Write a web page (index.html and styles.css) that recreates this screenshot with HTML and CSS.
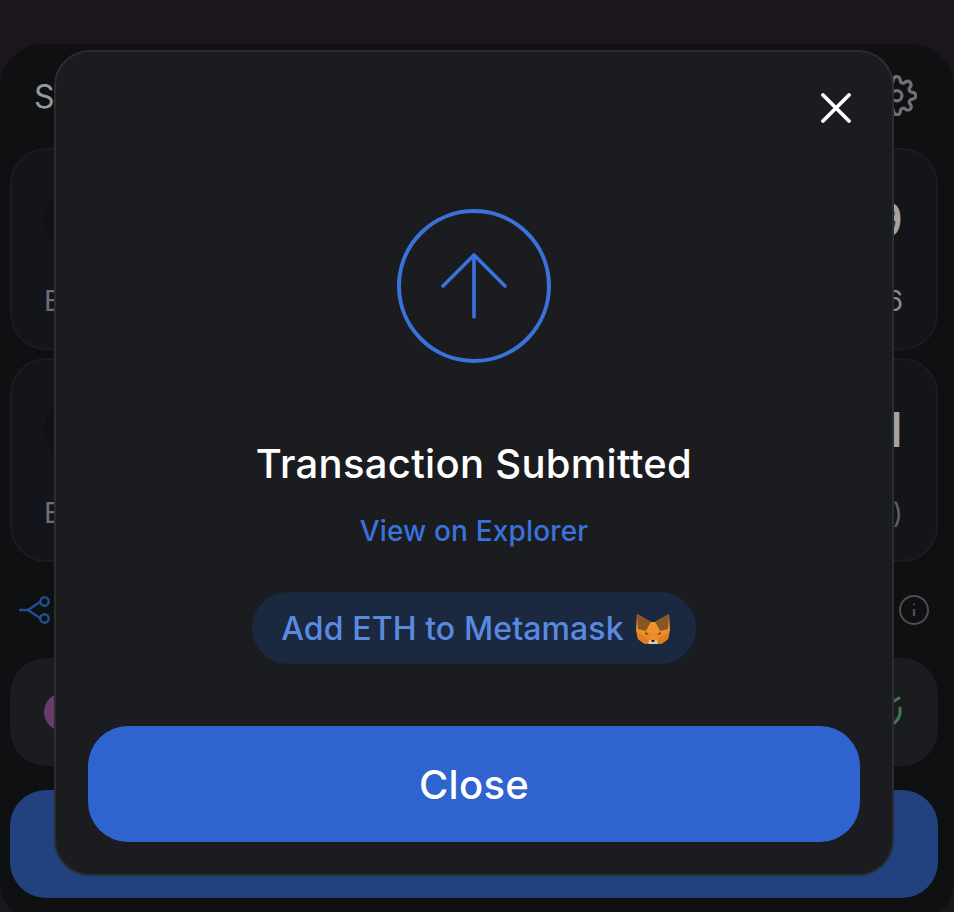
FILE: index.html
```html
<!DOCTYPE html>
<html lang="en">
<head>
<meta charset="utf-8">
<title>Swap</title>
<link rel="stylesheet" href="styles.css">
</head>
<body>
<main class="panel">
  <header class="panel-head">
    <span class="panel-title">Swap</span>
    <svg class="gear" viewBox="0 0 24 24" fill="none" stroke="#6f7073" stroke-width="1.9" stroke-linecap="round" stroke-linejoin="round"><circle cx="12" cy="12" r="3"/><path d="M19.4 15a1.65 1.65 0 0 0 .33 1.82l.06.06a2 2 0 0 1 0 2.83 2 2 0 0 1-2.83 0l-.06-.06a1.65 1.65 0 0 0-1.82-.33 1.65 1.65 0 0 0-1 1.51V21a2 2 0 0 1-2 2 2 2 0 0 1-2-2v-.09A1.65 1.65 0 0 0 9 19.4a1.65 1.65 0 0 0-1.82.33l-.06.06a2 2 0 0 1-2.83 0 2 2 0 0 1 0-2.83l.06-.06a1.65 1.65 0 0 0 .33-1.82 1.65 1.65 0 0 0-1.51-1H3a2 2 0 0 1-2-2 2 2 0 0 1 2-2h.09A1.65 1.65 0 0 0 4.6 9a1.65 1.65 0 0 0-.33-1.82l-.06-.06a2 2 0 0 1 0-2.83 2 2 0 0 1 2.83 0l.06.06a1.65 1.65 0 0 0 1.82.33H9a1.65 1.65 0 0 0 1-1.51V3a2 2 0 0 1 2-2 2 2 0 0 1 2 2v.09a1.65 1.65 0 0 0 1 1.51 1.65 1.65 0 0 0 1.82-.33l.06-.06a2 2 0 0 1 2.83 0 2 2 0 0 1 0 2.83l-.06.06a1.65 1.65 0 0 0-.33 1.82V9a1.65 1.65 0 0 0 1.51 1H21a2 2 0 0 1 2 2 2 2 0 0 1-2 2h-.09a1.65 1.65 0 0 0-1.51 1z"/></svg>
  </header>
  <section class="card card-first">
    <div class="card-top"><span class="token"></span><span class="amount">9</span></div>
    <div class="card-bottom"><span>Est</span><span>6</span></div>
  </section>
  <section class="card card-second">
    <div class="card-top"><span class="token"></span><span class="amount">I</span></div>
    <div class="card-bottom"><span>Est</span><span class="dim">)</span></div>
  </section>
  <div class="route">
    <svg class="route-icon" viewBox="0 0 32 28" fill="none" stroke="#224e96" stroke-width="2.4" stroke-linecap="round"><path d="M1 14h8M9 14l12-8M9 14l12 8"/><circle cx="25.5" cy="5.5" r="4.2"/><circle cx="25.5" cy="22.5" r="4.2"/></svg>
    <svg class="info-icon" viewBox="0 0 30 30" fill="none" stroke="#4d4e51" stroke-width="2"><circle cx="15" cy="15" r="14"/><path d="M15 14v7" stroke-width="2.4"/><circle cx="15" cy="9.5" r="1" fill="#4d4e51" stroke="none"/></svg>
  </div>
  <section class="provider">
    <span class="provider-dot"></span>
    <svg class="provider-check" viewBox="0 0 24 36" fill="none" stroke="#3b7a49" stroke-width="3" stroke-linecap="round"><path d="M10 9l8-5M19 14c1 8-3 14-9 17"/></svg>
  </section>
  <div class="swap-btn"></div>
</main>

<div class="modal" role="dialog">
  <div class="modal-top">
    <svg class="close-x" viewBox="0 0 30 30" stroke="#fff" stroke-width="3.8" stroke-linecap="round"><path d="M2 2l26 26M28 2L2 28"/></svg>
  </div>
  <svg class="submitted" viewBox="0 0 156 156" fill="none" stroke="#3a72dc" stroke-linecap="round" stroke-linejoin="round"><circle cx="78" cy="78" r="75" stroke-width="4"/><path d="M78 109V47M47 78l31-31 31 31" stroke-width="3.6"/></svg>
  <h2 class="modal-title">Transaction Submitted</h2>
  <a class="explorer">View on Explorer</a>
  <div class="add-token">
    <span>Add ETH to Metamask</span>
    <svg class="fox" viewBox="0 0 34 34">
      <path d="M1 2l14 8h4L33 2l1 16-2 9-7 5-5-2h-6l-5 2-7-5-2-9z" fill="#ee8c2c"/>
      <path d="M1 2l14 8-5 9-8-2z" fill="#8a5524"/>
      <path d="M33 2L19 10l5 9 8-2z" fill="#8a5524"/>
      <path d="M15 10h4l5 9-7 3-7-3z" fill="#f0932e"/>
      <path d="M10 20l-1 2 4 1zM24 20l1 2-4 1z" fill="#5a3a1e"/>
      <path d="M1 22l8 2 4 4-1 4-5-1-5-4z" fill="#df7f20"/>
      <path d="M33 22l-8 2-4 4 1 4 5-1 5-4z" fill="#df7f20"/>
      <path d="M13 28h8l1 4h-10z" fill="#d9c8b4"/>
      <path d="M15 28h4l-1 2h-2z" fill="#2a2320"/>
    </svg>
  </div>
  <div class="close-btn">Close</div>
</div>
</body>
</html>
```
FILE: styles.css
```css
* { box-sizing: border-box; }
html, body { margin: 0; height: 100%; }
body {
  position: relative;
  height: 912px;
  overflow: hidden;
  background: #1b161c;
  padding-top: 44px;
  font-family: "Inter", "Liberation Sans", sans-serif;
}
.panel {
  height: 880px;
  background: #0f1012;
  border-radius: 44px;
  padding: 0 16px 0 10px;
  display: flex;
  flex-direction: column;
}
.panel-head {
  height: 104px;
  flex: none;
  display: flex;
  align-items: center;
  justify-content: space-between;
  padding: 0 21px 0 24px;
}
.panel-title { font-size: 32px; color: #98999b; }
.gear { width: 41.5px; height: 41.5px; margin-top: -1px; }
.card {
  flex: none;
  background: #14151a;
  border: 2px solid #1b1c20;
  border-radius: 36px;
  padding: 38px 33px 30px 32px;
  display: flex;
  flex-direction: column;
  justify-content: space-between;
}
.card-first { height: 202px; }
.card-second { height: 204px; margin-top: 8px; }
.card-top, .card-bottom { display: flex; align-items: center; justify-content: space-between; }
.token {
  width: 64px; height: 64px; border-radius: 50%;
  background: #101115;
}
.amount { font-size: 48px; font-weight: 500; color: #a2a3a5; line-height: 60px; }
.card-bottom { font-size: 28px; color: #6e6f72; }
.card-bottom span:last-child { color: #8a8b8e; }
.card-bottom .dim { color: #5c5e6a !important; }
.route {
  height: 96px;
  flex: none;
  display: flex;
  align-items: center;
  justify-content: space-between;
  padding: 0 9px;
}
.route-icon { width: 32px; height: 28px; }
.info-icon { width: 30px; height: 30px; }
.provider {
  height: 108px;
  flex: none;
  background: #1b1c20;
  border-radius: 36px;
  display: flex;
  align-items: center;
  justify-content: space-between;
  padding: 0 33px 0 34px;
}
.provider-dot { width: 38px; height: 38px; border-radius: 50%; background: #6a3a6a; }
.provider-check { width: 24px; height: 36px; }
.swap-btn {
  height: 108px;
  flex: none;
  margin-top: 24px;
  background: #21427f;
  border-radius: 36px;
}
.modal {
  position: absolute;
  left: 54px;
  top: 50px;
  width: 840px;
  height: 826px;
  background: #1b1c20;
  border: 2px solid #2b2d33;
  border-radius: 36px;
  padding: 41px 32px 32px;
  display: flex;
  flex-direction: column;
  align-items: center;
}
.modal-top { width: 100%; flex: none; display: flex; justify-content: flex-end; padding-right: 9px; }
.close-x { width: 30px; height: 30px; }
.submitted { width: 156px; height: 156px; margin-top: 85px; flex: none; }
.modal-title {
  flex: none;
  margin: 76px 0 0;
  font-size: 40px;
  font-weight: 450;
  line-height: 48px;
  letter-spacing: 0.3px;
  color: #fff;
}
.explorer {
  flex: none;
  margin-top: 25px;
  font-size: 28px;
  font-weight: 450;
  line-height: 36px;
  letter-spacing: 0.15px;
  color: #3a72dc;
}
.add-token {
  flex: none;
  margin-top: 43px;
  height: 72px;
  padding: 0 26px 0 29px;
  background: #1a2840;
  border-radius: 36px;
  display: flex;
  align-items: center;
  gap: 12px;
  font-size: 32px;
  font-weight: 450;
  letter-spacing: 0.1px;
  color: #5a8ae0;
}
.fox { width: 34px; height: 34px; margin-top: 2px; }
.close-btn {
  flex: none;
  margin-top: 62px;
  width: 100%;
  height: 116px;
  background: #2f64cf;
  border-radius: 40px;
  display: flex;
  align-items: center;
  justify-content: center;
  font-size: 40px;
  font-weight: 450;
  letter-spacing: 0.3px;
  color: #fff;
}
```
